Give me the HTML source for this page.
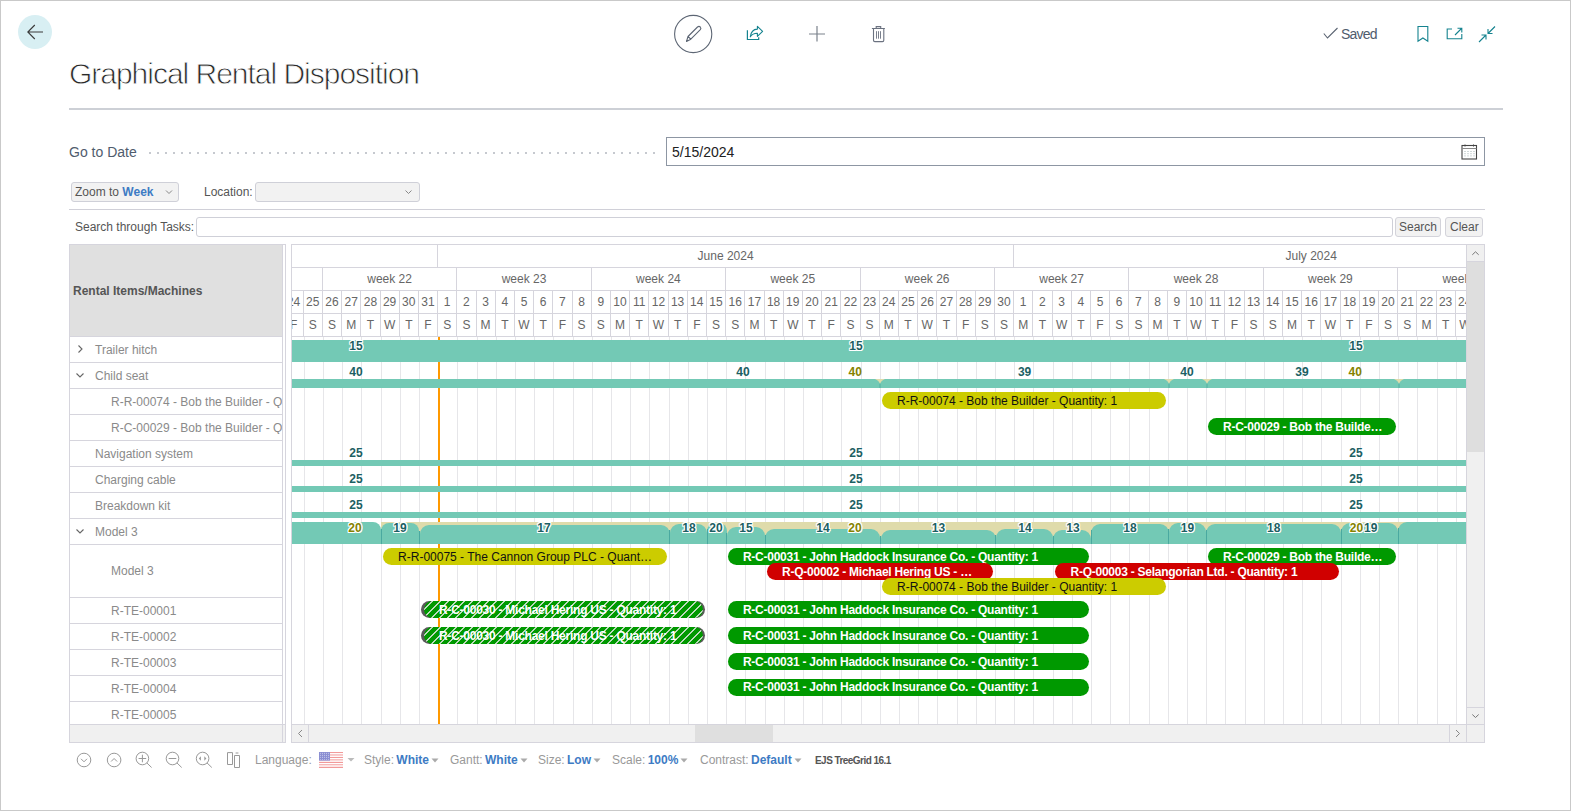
<!DOCTYPE html>
<html><head><meta charset="utf-8">
<style>
html,body{margin:0;padding:0;}
body{width:1571px;height:811px;overflow:hidden;position:relative;background:#fff;font-family:"Liberation Sans", sans-serif;}
.t{position:absolute;white-space:nowrap;line-height:1;}
.r{position:absolute;box-sizing:border-box;}
svg{position:absolute;overflow:visible;}
</style></head><body>

<div class="r" style="left:0px;top:0px;width:1571px;height:811px;border:1px solid #c9c9c9;border-right-width:1px;"></div>
<svg style="left:0;top:0" width="100" height="60"><circle cx="35" cy="32" r="17" fill="#d8eff3"/><path d="M28 32 H43 M34.8 25 L27.8 32 L34.8 39" fill="none" stroke="#3a3a3a" stroke-width="1.1"/></svg>
<svg style="left:660px;top:0" width="240" height="60"><circle cx="33.2" cy="34" r="18.6" fill="none" stroke="#5d6674" stroke-width="1.1"/><path d="M26.5 41.5 L28 36.5 L37.5 27 Q39 25.8 40.3 27 Q41.5 28.3 40.3 29.7 L30.8 39.2 Z M28 36.5 L30.8 39.2" fill="none" stroke="#5d6674" stroke-width="1.1" stroke-linejoin="round"/><path d="M87.4 30.2 V39.5 H98.7 V37.2" fill="none" stroke="#15838f" stroke-width="1.2"/><path d="M90.3 36.8 Q91.2 29.3 97.4 29.1 V26.3 L102.6 31.3 L97.4 36.3 V33.3 Q93 33.1 90.3 36.8 Z" fill="none" stroke="#15838f" stroke-width="1.1" stroke-linejoin="round"/><path d="M157 26 V41.5 M149 34 H165" fill="none" stroke="#7b828c" stroke-width="1.2"/><path d="M211.9 28.5 H224.9 M216.2 28.5 V26.6 H220.7 V28.5 M213.5 28.5 V40.3 Q213.5 41.6 214.8 41.6 H222.5 Q223.8 41.6 223.8 40.3 V28.5" fill="none" stroke="#6b7280" stroke-width="1.1"/><path d="M216.5 31.2 V38.7 M218.5 31.2 V38.7 M220.5 31.2 V38.7" fill="none" stroke="#6b7280" stroke-width="0.9"/></svg>
<svg style="left:1300px;top:0" width="271" height="60"><path d="M23.8 33.5 L27.5 38 L37.5 28" fill="none" stroke="#5b6472" stroke-width="1.1"/><path d="M118 26.5 H127.8 V41.3 L122.9 38 L118 41.3 Z" fill="none" stroke="#15838f" stroke-width="1.1" stroke-linejoin="miter"/><path d="M152 29 H147.2 V38.8 H161.8 V34" fill="none" stroke="#15838f" stroke-width="1.1"/><path d="M155 35 L161.5 28.5 M157.5 28.2 H161.8 V32.5" fill="none" stroke="#15838f" stroke-width="1.1"/><path d="M195 26.5 L188 33.5 M188 29 V33.5 H192.5 M179 42 L186 35 M181.5 35 H186 V39.5" fill="none" stroke="#15838f" stroke-width="1.1"/></svg>
<div class="t" style="left:1341.00px;top:26.95px;font-size:14px;color:#505c6d;font-weight:normal;letter-spacing:-0.8px;">Saved</div>
<div class="t" style="left:69.00px;top:59.41px;font-size:30px;color:#2a2a2a;font-weight:normal;letter-spacing:-1.02px;-webkit-text-stroke:0.8px #fff;">Graphical Rental Disposition</div>
<div class="r" style="left:69px;top:108px;width:1434px;height:2px;background:#cdd0d6;"></div>
<div class="t" style="left:69.00px;top:144.75px;font-size:14px;color:#505c6d;font-weight:normal;">Go to Date</div>
<div class="r" style="left:146px;top:152px;width:512px;height:2px;background-image:radial-gradient(circle,#c6c9cf 0.8px,transparent 1px);background-size:8px 2px;"></div>
<div class="r" style="left:666px;top:137px;width:819px;height:29px;border:1px solid #8d96a3;background:#fff;"></div>
<div class="t" style="left:672.00px;top:145.15px;font-size:14px;color:#212121;font-weight:normal;">5/15/2024</div>
<svg style="left:1460px;top:143px" width="20" height="20"><rect x="2" y="2.5" width="14.5" height="13.5" fill="none" stroke="#444" stroke-width="1.1"/><path d="M2 5.5 H16.5" stroke="#888" stroke-width="1"/><path d="M5 1.5 V3.5 M13.5 1.5 V3.5" stroke="#444" stroke-width="1"/><path d="M5 8 V14 M8 8 V14 M11 8 V14 M14 8 V14" stroke="#9aa" stroke-width="0.9" stroke-dasharray="1 1.2"/></svg>
<div class="r" style="left:71px;top:182px;width:108px;height:20px;border:1px solid #cfd0d8;border-radius:3px;background:#f2f2f2;"></div>
<div class="t" style="left:75.00px;top:185.84px;font-size:12px;color:#555;font-weight:normal;">Zoom to <b style="color:#3d7bc4">Week</b></div>
<svg style="left:160px;top:183px" width="20" height="20"><path d="M6 7.5 L9 10.5 L12 7.5" fill="none" stroke="#888" stroke-width="1"/></svg>
<div class="t" style="left:204.00px;top:185.84px;font-size:12px;color:#555;font-weight:normal;">Location:</div>
<div class="r" style="left:255px;top:182px;width:165px;height:20px;border:1px solid #cfd0d8;border-radius:3px;background:#f2f2f2;"></div>
<svg style="left:400px;top:183px" width="20" height="20"><path d="M5.5 7.5 L8.5 10.5 L11.5 7.5" fill="none" stroke="#888" stroke-width="1"/></svg>
<div class="r" style="left:69px;top:209px;width:1416px;height:1px;background:#d0d0d8;"></div>
<div class="t" style="left:75.00px;top:220.84px;font-size:12px;color:#555;font-weight:normal;">Search through Tasks:</div>
<div class="r" style="left:196px;top:217px;width:1197px;height:20px;border:1px solid #cfd0d8;border-radius:3px;background:#fff;"></div>
<div class="r" style="left:1395px;top:217px;width:46px;height:20px;border:1px solid #d3d3da;border-radius:3px;background:#f2f2f2;"></div>
<div class="t" style="left:1399.00px;top:220.84px;font-size:12px;color:#555;font-weight:normal;">Search</div>
<div class="r" style="left:1445px;top:217px;width:38px;height:20px;border:1px solid #d3d3da;border-radius:3px;background:#f2f2f2;"></div>
<div class="t" style="left:1450.00px;top:220.84px;font-size:12px;color:#555;font-weight:normal;">Clear</div>
<div class="r" style="left:69px;top:244px;width:217px;height:499px;border:1px solid #d6d5dd;background:#fff;"></div>
<div class="r" style="left:70px;top:245px;width:212px;height:91px;background:#e0e0e0;"></div>
<div class="r" style="left:282px;top:245px;width:1px;height:497px;background:#d6d5dd;"></div>
<div class="t" style="left:73.00px;top:285.04px;font-size:12px;color:#555;font-weight:bold;">Rental Items/Machines</div>
<div class="r" style="left:70px;top:336px;width:212px;height:1px;background:#d6d5dd;"></div>
<div class="r" style="left:70px;top:362px;width:212px;height:1px;background:#d6d5dd;"></div>
<div class="r" style="left:70px;top:388px;width:212px;height:1px;background:#d6d5dd;"></div>
<div class="r" style="left:70px;top:414px;width:212px;height:1px;background:#d6d5dd;"></div>
<div class="r" style="left:70px;top:440px;width:212px;height:1px;background:#d6d5dd;"></div>
<div class="r" style="left:70px;top:466px;width:212px;height:1px;background:#d6d5dd;"></div>
<div class="r" style="left:70px;top:492px;width:212px;height:1px;background:#d6d5dd;"></div>
<div class="r" style="left:70px;top:518px;width:212px;height:1px;background:#d6d5dd;"></div>
<div class="r" style="left:70px;top:544px;width:212px;height:1px;background:#d6d5dd;"></div>
<div class="r" style="left:70px;top:597px;width:212px;height:1px;background:#d6d5dd;"></div>
<div class="r" style="left:70px;top:623px;width:212px;height:1px;background:#d6d5dd;"></div>
<div class="r" style="left:70px;top:649px;width:212px;height:1px;background:#d6d5dd;"></div>
<div class="r" style="left:70px;top:675px;width:212px;height:1px;background:#d6d5dd;"></div>
<div class="r" style="left:70px;top:701px;width:212px;height:1px;background:#d6d5dd;"></div>
<div class="r" style="left:70px;top:725px;width:212px;height:17px;background:#f0f0f0;"></div>
<div class="r" style="left:283px;top:725px;width:2px;height:17px;background:#f0f0f0;"></div>
<div class="r" style="left:70px;top:724px;width:215px;height:1px;background:#d6d5dd;"></div>
<svg style="left:74px;top:343px" width="12" height="12"><path d="M4.5 2.5 L8 6 L4.5 9.5" fill="none" stroke="#666" stroke-width="1.1"/></svg>
<div class="t" style="left:95.00px;top:343.74px;font-size:12px;color:#8a8a8a;font-weight:normal;">Trailer hitch</div>
<svg style="left:74px;top:369px" width="12" height="12"><path d="M2.5 4.5 L6 8 L9.5 4.5" fill="none" stroke="#666" stroke-width="1.1"/></svg>
<div class="t" style="left:95.00px;top:369.74px;font-size:12px;color:#8a8a8a;font-weight:normal;">Child seat</div>
<div class="t" style="left:111.00px;top:395.74px;font-size:12px;color:#8a8a8a;font-weight:normal;width:171px;overflow:hidden;">R-R-00074 - Bob the Builder - Quantity: 1</div>
<div class="t" style="left:111.00px;top:421.74px;font-size:12px;color:#8a8a8a;font-weight:normal;width:171px;overflow:hidden;">R-C-00029 - Bob the Builder - Quantity: 1</div>
<div class="t" style="left:95.00px;top:447.74px;font-size:12px;color:#8a8a8a;font-weight:normal;">Navigation system</div>
<div class="t" style="left:95.00px;top:473.74px;font-size:12px;color:#8a8a8a;font-weight:normal;">Charging cable</div>
<div class="t" style="left:95.00px;top:499.74px;font-size:12px;color:#8a8a8a;font-weight:normal;">Breakdown kit</div>
<svg style="left:74px;top:525px" width="12" height="12"><path d="M2.5 4.5 L6 8 L9.5 4.5" fill="none" stroke="#666" stroke-width="1.1"/></svg>
<div class="t" style="left:95.00px;top:525.74px;font-size:12px;color:#8a8a8a;font-weight:normal;">Model 3</div>
<div class="t" style="left:111.00px;top:564.74px;font-size:12px;color:#8a8a8a;font-weight:normal;">Model 3</div>
<div class="t" style="left:111.00px;top:604.74px;font-size:12px;color:#8a8a8a;font-weight:normal;">R-TE-00001</div>
<div class="t" style="left:111.00px;top:630.74px;font-size:12px;color:#8a8a8a;font-weight:normal;">R-TE-00002</div>
<div class="t" style="left:111.00px;top:656.74px;font-size:12px;color:#8a8a8a;font-weight:normal;">R-TE-00003</div>
<div class="t" style="left:111.00px;top:682.74px;font-size:12px;color:#8a8a8a;font-weight:normal;">R-TE-00004</div>
<div class="t" style="left:111.00px;top:708.74px;font-size:12px;color:#8a8a8a;font-weight:normal;">R-TE-00005</div>
<div class="r" style="left:291px;top:244px;width:1194px;height:499px;border:1px solid #d6d5dd;background:#fff;"></div>
<div class="r" style="left:292px;top:267px;width:1174px;height:1px;background:#d6d5dd;"></div>
<div class="r" style="left:292px;top:290px;width:1174px;height:1px;background:#d6d5dd;"></div>
<div class="r" style="left:292px;top:313px;width:1174px;height:1px;background:#d6d5dd;"></div>
<div class="r" style="left:292px;top:336px;width:1174px;height:1px;background:#d6d5dd;"></div>
<div style="position:absolute;left:292px;top:245px;width:1174px;height:479px;overflow:hidden;">
<div class="r" style="left:-28.00px;top:46.00px;width:1.00px;height:45.00px;background:#d6d5dd;"></div>
<div class="r" style="left:-27.00px;top:92.00px;width:1.00px;height:387.00px;background:#e6e6e9;"></div>
<div class="t" style="left:-32.60px;width:30px;text-align:center;top:51.34px;font-size:12px;color:#666;font-weight:normal;">23</div>
<div class="t" style="left:-32.60px;width:30px;text-align:center;top:73.84px;font-size:12px;color:#666;font-weight:normal;">T</div>
<div class="r" style="left:-8.00px;top:46.00px;width:1.00px;height:45.00px;background:#d6d5dd;"></div>
<div class="r" style="left:-7.00px;top:92.00px;width:1.00px;height:387.00px;background:#e6e6e9;"></div>
<div class="t" style="left:-13.40px;width:30px;text-align:center;top:51.34px;font-size:12px;color:#666;font-weight:normal;">24</div>
<div class="t" style="left:-13.40px;width:30px;text-align:center;top:73.84px;font-size:12px;color:#666;font-weight:normal;">F</div>
<div class="r" style="left:11.00px;top:46.00px;width:1.00px;height:45.00px;background:#d6d5dd;"></div>
<div class="r" style="left:12.00px;top:92.00px;width:1.00px;height:387.00px;background:#e6e6e9;"></div>
<div class="t" style="left:5.80px;width:30px;text-align:center;top:51.34px;font-size:12px;color:#666;font-weight:normal;">25</div>
<div class="t" style="left:5.80px;width:30px;text-align:center;top:73.84px;font-size:12px;color:#666;font-weight:normal;">S</div>
<div class="r" style="left:30.00px;top:46.00px;width:1.00px;height:45.00px;background:#d6d5dd;"></div>
<div class="r" style="left:31.00px;top:92.00px;width:1.00px;height:387.00px;background:#e6e6e9;"></div>
<div class="t" style="left:25.00px;width:30px;text-align:center;top:51.34px;font-size:12px;color:#666;font-weight:normal;">26</div>
<div class="t" style="left:25.00px;width:30px;text-align:center;top:73.84px;font-size:12px;color:#666;font-weight:normal;">S</div>
<div class="r" style="left:30.00px;top:23.00px;width:1.00px;height:22.00px;background:#d6d5dd;"></div>
<div class="r" style="left:49.00px;top:46.00px;width:1.00px;height:45.00px;background:#d6d5dd;"></div>
<div class="r" style="left:50.00px;top:92.00px;width:1.00px;height:387.00px;background:#e6e6e9;"></div>
<div class="t" style="left:44.20px;width:30px;text-align:center;top:51.34px;font-size:12px;color:#666;font-weight:normal;">27</div>
<div class="t" style="left:44.20px;width:30px;text-align:center;top:73.84px;font-size:12px;color:#666;font-weight:normal;">M</div>
<div class="r" style="left:68.00px;top:46.00px;width:1.00px;height:45.00px;background:#d6d5dd;"></div>
<div class="r" style="left:69.00px;top:92.00px;width:1.00px;height:387.00px;background:#e6e6e9;"></div>
<div class="t" style="left:63.40px;width:30px;text-align:center;top:51.34px;font-size:12px;color:#666;font-weight:normal;">28</div>
<div class="t" style="left:63.40px;width:30px;text-align:center;top:73.84px;font-size:12px;color:#666;font-weight:normal;">T</div>
<div class="r" style="left:88.00px;top:46.00px;width:1.00px;height:45.00px;background:#d6d5dd;"></div>
<div class="r" style="left:89.00px;top:92.00px;width:1.00px;height:387.00px;background:#e6e6e9;"></div>
<div class="t" style="left:82.60px;width:30px;text-align:center;top:51.34px;font-size:12px;color:#666;font-weight:normal;">29</div>
<div class="t" style="left:82.60px;width:30px;text-align:center;top:73.84px;font-size:12px;color:#666;font-weight:normal;">W</div>
<div class="r" style="left:107.00px;top:46.00px;width:1.00px;height:45.00px;background:#d6d5dd;"></div>
<div class="r" style="left:108.00px;top:92.00px;width:1.00px;height:387.00px;background:#e6e6e9;"></div>
<div class="t" style="left:101.80px;width:30px;text-align:center;top:51.34px;font-size:12px;color:#666;font-weight:normal;">30</div>
<div class="t" style="left:101.80px;width:30px;text-align:center;top:73.84px;font-size:12px;color:#666;font-weight:normal;">T</div>
<div class="r" style="left:126.00px;top:46.00px;width:1.00px;height:45.00px;background:#d6d5dd;"></div>
<div class="r" style="left:127.00px;top:92.00px;width:1.00px;height:387.00px;background:#e6e6e9;"></div>
<div class="t" style="left:121.00px;width:30px;text-align:center;top:51.34px;font-size:12px;color:#666;font-weight:normal;">31</div>
<div class="t" style="left:121.00px;width:30px;text-align:center;top:73.84px;font-size:12px;color:#666;font-weight:normal;">F</div>
<div class="r" style="left:145.00px;top:46.00px;width:1.00px;height:45.00px;background:#d6d5dd;"></div>
<div class="r" style="left:146.00px;top:92.00px;width:1.00px;height:387.00px;background:#e6e6e9;"></div>
<div class="t" style="left:140.20px;width:30px;text-align:center;top:51.34px;font-size:12px;color:#666;font-weight:normal;">1</div>
<div class="t" style="left:140.20px;width:30px;text-align:center;top:73.84px;font-size:12px;color:#666;font-weight:normal;">S</div>
<div class="r" style="left:164.00px;top:46.00px;width:1.00px;height:45.00px;background:#d6d5dd;"></div>
<div class="r" style="left:165.00px;top:92.00px;width:1.00px;height:387.00px;background:#e6e6e9;"></div>
<div class="t" style="left:159.40px;width:30px;text-align:center;top:51.34px;font-size:12px;color:#666;font-weight:normal;">2</div>
<div class="t" style="left:159.40px;width:30px;text-align:center;top:73.84px;font-size:12px;color:#666;font-weight:normal;">S</div>
<div class="r" style="left:164.00px;top:23.00px;width:1.00px;height:22.00px;background:#d6d5dd;"></div>
<div class="r" style="left:184.00px;top:46.00px;width:1.00px;height:45.00px;background:#d6d5dd;"></div>
<div class="r" style="left:185.00px;top:92.00px;width:1.00px;height:387.00px;background:#e6e6e9;"></div>
<div class="t" style="left:178.60px;width:30px;text-align:center;top:51.34px;font-size:12px;color:#666;font-weight:normal;">3</div>
<div class="t" style="left:178.60px;width:30px;text-align:center;top:73.84px;font-size:12px;color:#666;font-weight:normal;">M</div>
<div class="r" style="left:203.00px;top:46.00px;width:1.00px;height:45.00px;background:#d6d5dd;"></div>
<div class="r" style="left:204.00px;top:92.00px;width:1.00px;height:387.00px;background:#e6e6e9;"></div>
<div class="t" style="left:197.80px;width:30px;text-align:center;top:51.34px;font-size:12px;color:#666;font-weight:normal;">4</div>
<div class="t" style="left:197.80px;width:30px;text-align:center;top:73.84px;font-size:12px;color:#666;font-weight:normal;">T</div>
<div class="r" style="left:222.00px;top:46.00px;width:1.00px;height:45.00px;background:#d6d5dd;"></div>
<div class="r" style="left:223.00px;top:92.00px;width:1.00px;height:387.00px;background:#e6e6e9;"></div>
<div class="t" style="left:217.00px;width:30px;text-align:center;top:51.34px;font-size:12px;color:#666;font-weight:normal;">5</div>
<div class="t" style="left:217.00px;width:30px;text-align:center;top:73.84px;font-size:12px;color:#666;font-weight:normal;">W</div>
<div class="r" style="left:241.00px;top:46.00px;width:1.00px;height:45.00px;background:#d6d5dd;"></div>
<div class="r" style="left:242.00px;top:92.00px;width:1.00px;height:387.00px;background:#e6e6e9;"></div>
<div class="t" style="left:236.20px;width:30px;text-align:center;top:51.34px;font-size:12px;color:#666;font-weight:normal;">6</div>
<div class="t" style="left:236.20px;width:30px;text-align:center;top:73.84px;font-size:12px;color:#666;font-weight:normal;">T</div>
<div class="r" style="left:260.00px;top:46.00px;width:1.00px;height:45.00px;background:#d6d5dd;"></div>
<div class="r" style="left:261.00px;top:92.00px;width:1.00px;height:387.00px;background:#e6e6e9;"></div>
<div class="t" style="left:255.40px;width:30px;text-align:center;top:51.34px;font-size:12px;color:#666;font-weight:normal;">7</div>
<div class="t" style="left:255.40px;width:30px;text-align:center;top:73.84px;font-size:12px;color:#666;font-weight:normal;">F</div>
<div class="r" style="left:280.00px;top:46.00px;width:1.00px;height:45.00px;background:#d6d5dd;"></div>
<div class="r" style="left:281.00px;top:92.00px;width:1.00px;height:387.00px;background:#e6e6e9;"></div>
<div class="t" style="left:274.60px;width:30px;text-align:center;top:51.34px;font-size:12px;color:#666;font-weight:normal;">8</div>
<div class="t" style="left:274.60px;width:30px;text-align:center;top:73.84px;font-size:12px;color:#666;font-weight:normal;">S</div>
<div class="r" style="left:299.00px;top:46.00px;width:1.00px;height:45.00px;background:#d6d5dd;"></div>
<div class="r" style="left:300.00px;top:92.00px;width:1.00px;height:387.00px;background:#e6e6e9;"></div>
<div class="t" style="left:293.80px;width:30px;text-align:center;top:51.34px;font-size:12px;color:#666;font-weight:normal;">9</div>
<div class="t" style="left:293.80px;width:30px;text-align:center;top:73.84px;font-size:12px;color:#666;font-weight:normal;">S</div>
<div class="r" style="left:299.00px;top:23.00px;width:1.00px;height:22.00px;background:#d6d5dd;"></div>
<div class="r" style="left:318.00px;top:46.00px;width:1.00px;height:45.00px;background:#d6d5dd;"></div>
<div class="r" style="left:319.00px;top:92.00px;width:1.00px;height:387.00px;background:#e6e6e9;"></div>
<div class="t" style="left:313.00px;width:30px;text-align:center;top:51.34px;font-size:12px;color:#666;font-weight:normal;">10</div>
<div class="t" style="left:313.00px;width:30px;text-align:center;top:73.84px;font-size:12px;color:#666;font-weight:normal;">M</div>
<div class="r" style="left:337.00px;top:46.00px;width:1.00px;height:45.00px;background:#d6d5dd;"></div>
<div class="r" style="left:338.00px;top:92.00px;width:1.00px;height:387.00px;background:#e6e6e9;"></div>
<div class="t" style="left:332.20px;width:30px;text-align:center;top:51.34px;font-size:12px;color:#666;font-weight:normal;">11</div>
<div class="t" style="left:332.20px;width:30px;text-align:center;top:73.84px;font-size:12px;color:#666;font-weight:normal;">T</div>
<div class="r" style="left:356.00px;top:46.00px;width:1.00px;height:45.00px;background:#d6d5dd;"></div>
<div class="r" style="left:357.00px;top:92.00px;width:1.00px;height:387.00px;background:#e6e6e9;"></div>
<div class="t" style="left:351.40px;width:30px;text-align:center;top:51.34px;font-size:12px;color:#666;font-weight:normal;">12</div>
<div class="t" style="left:351.40px;width:30px;text-align:center;top:73.84px;font-size:12px;color:#666;font-weight:normal;">W</div>
<div class="r" style="left:376.00px;top:46.00px;width:1.00px;height:45.00px;background:#d6d5dd;"></div>
<div class="r" style="left:377.00px;top:92.00px;width:1.00px;height:387.00px;background:#e6e6e9;"></div>
<div class="t" style="left:370.60px;width:30px;text-align:center;top:51.34px;font-size:12px;color:#666;font-weight:normal;">13</div>
<div class="t" style="left:370.60px;width:30px;text-align:center;top:73.84px;font-size:12px;color:#666;font-weight:normal;">T</div>
<div class="r" style="left:395.00px;top:46.00px;width:1.00px;height:45.00px;background:#d6d5dd;"></div>
<div class="r" style="left:396.00px;top:92.00px;width:1.00px;height:387.00px;background:#e6e6e9;"></div>
<div class="t" style="left:389.80px;width:30px;text-align:center;top:51.34px;font-size:12px;color:#666;font-weight:normal;">14</div>
<div class="t" style="left:389.80px;width:30px;text-align:center;top:73.84px;font-size:12px;color:#666;font-weight:normal;">F</div>
<div class="r" style="left:414.00px;top:46.00px;width:1.00px;height:45.00px;background:#d6d5dd;"></div>
<div class="r" style="left:415.00px;top:92.00px;width:1.00px;height:387.00px;background:#e6e6e9;"></div>
<div class="t" style="left:409.00px;width:30px;text-align:center;top:51.34px;font-size:12px;color:#666;font-weight:normal;">15</div>
<div class="t" style="left:409.00px;width:30px;text-align:center;top:73.84px;font-size:12px;color:#666;font-weight:normal;">S</div>
<div class="r" style="left:433.00px;top:46.00px;width:1.00px;height:45.00px;background:#d6d5dd;"></div>
<div class="r" style="left:434.00px;top:92.00px;width:1.00px;height:387.00px;background:#e6e6e9;"></div>
<div class="t" style="left:428.20px;width:30px;text-align:center;top:51.34px;font-size:12px;color:#666;font-weight:normal;">16</div>
<div class="t" style="left:428.20px;width:30px;text-align:center;top:73.84px;font-size:12px;color:#666;font-weight:normal;">S</div>
<div class="r" style="left:433.00px;top:23.00px;width:1.00px;height:22.00px;background:#d6d5dd;"></div>
<div class="r" style="left:452.00px;top:46.00px;width:1.00px;height:45.00px;background:#d6d5dd;"></div>
<div class="r" style="left:453.00px;top:92.00px;width:1.00px;height:387.00px;background:#e6e6e9;"></div>
<div class="t" style="left:447.40px;width:30px;text-align:center;top:51.34px;font-size:12px;color:#666;font-weight:normal;">17</div>
<div class="t" style="left:447.40px;width:30px;text-align:center;top:73.84px;font-size:12px;color:#666;font-weight:normal;">M</div>
<div class="r" style="left:472.00px;top:46.00px;width:1.00px;height:45.00px;background:#d6d5dd;"></div>
<div class="r" style="left:473.00px;top:92.00px;width:1.00px;height:387.00px;background:#e6e6e9;"></div>
<div class="t" style="left:466.60px;width:30px;text-align:center;top:51.34px;font-size:12px;color:#666;font-weight:normal;">18</div>
<div class="t" style="left:466.60px;width:30px;text-align:center;top:73.84px;font-size:12px;color:#666;font-weight:normal;">T</div>
<div class="r" style="left:491.00px;top:46.00px;width:1.00px;height:45.00px;background:#d6d5dd;"></div>
<div class="r" style="left:492.00px;top:92.00px;width:1.00px;height:387.00px;background:#e6e6e9;"></div>
<div class="t" style="left:485.80px;width:30px;text-align:center;top:51.34px;font-size:12px;color:#666;font-weight:normal;">19</div>
<div class="t" style="left:485.80px;width:30px;text-align:center;top:73.84px;font-size:12px;color:#666;font-weight:normal;">W</div>
<div class="r" style="left:510.00px;top:46.00px;width:1.00px;height:45.00px;background:#d6d5dd;"></div>
<div class="r" style="left:511.00px;top:92.00px;width:1.00px;height:387.00px;background:#e6e6e9;"></div>
<div class="t" style="left:505.00px;width:30px;text-align:center;top:51.34px;font-size:12px;color:#666;font-weight:normal;">20</div>
<div class="t" style="left:505.00px;width:30px;text-align:center;top:73.84px;font-size:12px;color:#666;font-weight:normal;">T</div>
<div class="r" style="left:529.00px;top:46.00px;width:1.00px;height:45.00px;background:#d6d5dd;"></div>
<div class="r" style="left:530.00px;top:92.00px;width:1.00px;height:387.00px;background:#e6e6e9;"></div>
<div class="t" style="left:524.20px;width:30px;text-align:center;top:51.34px;font-size:12px;color:#666;font-weight:normal;">21</div>
<div class="t" style="left:524.20px;width:30px;text-align:center;top:73.84px;font-size:12px;color:#666;font-weight:normal;">F</div>
<div class="r" style="left:548.00px;top:46.00px;width:1.00px;height:45.00px;background:#d6d5dd;"></div>
<div class="r" style="left:549.00px;top:92.00px;width:1.00px;height:387.00px;background:#e6e6e9;"></div>
<div class="t" style="left:543.40px;width:30px;text-align:center;top:51.34px;font-size:12px;color:#666;font-weight:normal;">22</div>
<div class="t" style="left:543.40px;width:30px;text-align:center;top:73.84px;font-size:12px;color:#666;font-weight:normal;">S</div>
<div class="r" style="left:568.00px;top:46.00px;width:1.00px;height:45.00px;background:#d6d5dd;"></div>
<div class="r" style="left:569.00px;top:92.00px;width:1.00px;height:387.00px;background:#e6e6e9;"></div>
<div class="t" style="left:562.60px;width:30px;text-align:center;top:51.34px;font-size:12px;color:#666;font-weight:normal;">23</div>
<div class="t" style="left:562.60px;width:30px;text-align:center;top:73.84px;font-size:12px;color:#666;font-weight:normal;">S</div>
<div class="r" style="left:568.00px;top:23.00px;width:1.00px;height:22.00px;background:#d6d5dd;"></div>
<div class="r" style="left:587.00px;top:46.00px;width:1.00px;height:45.00px;background:#d6d5dd;"></div>
<div class="r" style="left:588.00px;top:92.00px;width:1.00px;height:387.00px;background:#e6e6e9;"></div>
<div class="t" style="left:581.80px;width:30px;text-align:center;top:51.34px;font-size:12px;color:#666;font-weight:normal;">24</div>
<div class="t" style="left:581.80px;width:30px;text-align:center;top:73.84px;font-size:12px;color:#666;font-weight:normal;">M</div>
<div class="r" style="left:606.00px;top:46.00px;width:1.00px;height:45.00px;background:#d6d5dd;"></div>
<div class="r" style="left:607.00px;top:92.00px;width:1.00px;height:387.00px;background:#e6e6e9;"></div>
<div class="t" style="left:601.00px;width:30px;text-align:center;top:51.34px;font-size:12px;color:#666;font-weight:normal;">25</div>
<div class="t" style="left:601.00px;width:30px;text-align:center;top:73.84px;font-size:12px;color:#666;font-weight:normal;">T</div>
<div class="r" style="left:625.00px;top:46.00px;width:1.00px;height:45.00px;background:#d6d5dd;"></div>
<div class="r" style="left:626.00px;top:92.00px;width:1.00px;height:387.00px;background:#e6e6e9;"></div>
<div class="t" style="left:620.20px;width:30px;text-align:center;top:51.34px;font-size:12px;color:#666;font-weight:normal;">26</div>
<div class="t" style="left:620.20px;width:30px;text-align:center;top:73.84px;font-size:12px;color:#666;font-weight:normal;">W</div>
<div class="r" style="left:644.00px;top:46.00px;width:1.00px;height:45.00px;background:#d6d5dd;"></div>
<div class="r" style="left:645.00px;top:92.00px;width:1.00px;height:387.00px;background:#e6e6e9;"></div>
<div class="t" style="left:639.40px;width:30px;text-align:center;top:51.34px;font-size:12px;color:#666;font-weight:normal;">27</div>
<div class="t" style="left:639.40px;width:30px;text-align:center;top:73.84px;font-size:12px;color:#666;font-weight:normal;">T</div>
<div class="r" style="left:664.00px;top:46.00px;width:1.00px;height:45.00px;background:#d6d5dd;"></div>
<div class="r" style="left:665.00px;top:92.00px;width:1.00px;height:387.00px;background:#e6e6e9;"></div>
<div class="t" style="left:658.60px;width:30px;text-align:center;top:51.34px;font-size:12px;color:#666;font-weight:normal;">28</div>
<div class="t" style="left:658.60px;width:30px;text-align:center;top:73.84px;font-size:12px;color:#666;font-weight:normal;">F</div>
<div class="r" style="left:683.00px;top:46.00px;width:1.00px;height:45.00px;background:#d6d5dd;"></div>
<div class="r" style="left:684.00px;top:92.00px;width:1.00px;height:387.00px;background:#e6e6e9;"></div>
<div class="t" style="left:677.80px;width:30px;text-align:center;top:51.34px;font-size:12px;color:#666;font-weight:normal;">29</div>
<div class="t" style="left:677.80px;width:30px;text-align:center;top:73.84px;font-size:12px;color:#666;font-weight:normal;">S</div>
<div class="r" style="left:702.00px;top:46.00px;width:1.00px;height:45.00px;background:#d6d5dd;"></div>
<div class="r" style="left:703.00px;top:92.00px;width:1.00px;height:387.00px;background:#e6e6e9;"></div>
<div class="t" style="left:697.00px;width:30px;text-align:center;top:51.34px;font-size:12px;color:#666;font-weight:normal;">30</div>
<div class="t" style="left:697.00px;width:30px;text-align:center;top:73.84px;font-size:12px;color:#666;font-weight:normal;">S</div>
<div class="r" style="left:702.00px;top:23.00px;width:1.00px;height:22.00px;background:#d6d5dd;"></div>
<div class="r" style="left:721.00px;top:46.00px;width:1.00px;height:45.00px;background:#d6d5dd;"></div>
<div class="r" style="left:722.00px;top:92.00px;width:1.00px;height:387.00px;background:#e6e6e9;"></div>
<div class="t" style="left:716.20px;width:30px;text-align:center;top:51.34px;font-size:12px;color:#666;font-weight:normal;">1</div>
<div class="t" style="left:716.20px;width:30px;text-align:center;top:73.84px;font-size:12px;color:#666;font-weight:normal;">M</div>
<div class="r" style="left:740.00px;top:46.00px;width:1.00px;height:45.00px;background:#d6d5dd;"></div>
<div class="r" style="left:741.00px;top:92.00px;width:1.00px;height:387.00px;background:#e6e6e9;"></div>
<div class="t" style="left:735.40px;width:30px;text-align:center;top:51.34px;font-size:12px;color:#666;font-weight:normal;">2</div>
<div class="t" style="left:735.40px;width:30px;text-align:center;top:73.84px;font-size:12px;color:#666;font-weight:normal;">T</div>
<div class="r" style="left:760.00px;top:46.00px;width:1.00px;height:45.00px;background:#d6d5dd;"></div>
<div class="r" style="left:761.00px;top:92.00px;width:1.00px;height:387.00px;background:#e6e6e9;"></div>
<div class="t" style="left:754.60px;width:30px;text-align:center;top:51.34px;font-size:12px;color:#666;font-weight:normal;">3</div>
<div class="t" style="left:754.60px;width:30px;text-align:center;top:73.84px;font-size:12px;color:#666;font-weight:normal;">W</div>
<div class="r" style="left:779.00px;top:46.00px;width:1.00px;height:45.00px;background:#d6d5dd;"></div>
<div class="r" style="left:780.00px;top:92.00px;width:1.00px;height:387.00px;background:#e6e6e9;"></div>
<div class="t" style="left:773.80px;width:30px;text-align:center;top:51.34px;font-size:12px;color:#666;font-weight:normal;">4</div>
<div class="t" style="left:773.80px;width:30px;text-align:center;top:73.84px;font-size:12px;color:#666;font-weight:normal;">T</div>
<div class="r" style="left:798.00px;top:46.00px;width:1.00px;height:45.00px;background:#d6d5dd;"></div>
<div class="r" style="left:799.00px;top:92.00px;width:1.00px;height:387.00px;background:#e6e6e9;"></div>
<div class="t" style="left:793.00px;width:30px;text-align:center;top:51.34px;font-size:12px;color:#666;font-weight:normal;">5</div>
<div class="t" style="left:793.00px;width:30px;text-align:center;top:73.84px;font-size:12px;color:#666;font-weight:normal;">F</div>
<div class="r" style="left:817.00px;top:46.00px;width:1.00px;height:45.00px;background:#d6d5dd;"></div>
<div class="r" style="left:818.00px;top:92.00px;width:1.00px;height:387.00px;background:#e6e6e9;"></div>
<div class="t" style="left:812.20px;width:30px;text-align:center;top:51.34px;font-size:12px;color:#666;font-weight:normal;">6</div>
<div class="t" style="left:812.20px;width:30px;text-align:center;top:73.84px;font-size:12px;color:#666;font-weight:normal;">S</div>
<div class="r" style="left:836.00px;top:46.00px;width:1.00px;height:45.00px;background:#d6d5dd;"></div>
<div class="r" style="left:837.00px;top:92.00px;width:1.00px;height:387.00px;background:#e6e6e9;"></div>
<div class="t" style="left:831.40px;width:30px;text-align:center;top:51.34px;font-size:12px;color:#666;font-weight:normal;">7</div>
<div class="t" style="left:831.40px;width:30px;text-align:center;top:73.84px;font-size:12px;color:#666;font-weight:normal;">S</div>
<div class="r" style="left:836.00px;top:23.00px;width:1.00px;height:22.00px;background:#d6d5dd;"></div>
<div class="r" style="left:856.00px;top:46.00px;width:1.00px;height:45.00px;background:#d6d5dd;"></div>
<div class="r" style="left:857.00px;top:92.00px;width:1.00px;height:387.00px;background:#e6e6e9;"></div>
<div class="t" style="left:850.60px;width:30px;text-align:center;top:51.34px;font-size:12px;color:#666;font-weight:normal;">8</div>
<div class="t" style="left:850.60px;width:30px;text-align:center;top:73.84px;font-size:12px;color:#666;font-weight:normal;">M</div>
<div class="r" style="left:875.00px;top:46.00px;width:1.00px;height:45.00px;background:#d6d5dd;"></div>
<div class="r" style="left:876.00px;top:92.00px;width:1.00px;height:387.00px;background:#e6e6e9;"></div>
<div class="t" style="left:869.80px;width:30px;text-align:center;top:51.34px;font-size:12px;color:#666;font-weight:normal;">9</div>
<div class="t" style="left:869.80px;width:30px;text-align:center;top:73.84px;font-size:12px;color:#666;font-weight:normal;">T</div>
<div class="r" style="left:894.00px;top:46.00px;width:1.00px;height:45.00px;background:#d6d5dd;"></div>
<div class="r" style="left:895.00px;top:92.00px;width:1.00px;height:387.00px;background:#e6e6e9;"></div>
<div class="t" style="left:889.00px;width:30px;text-align:center;top:51.34px;font-size:12px;color:#666;font-weight:normal;">10</div>
<div class="t" style="left:889.00px;width:30px;text-align:center;top:73.84px;font-size:12px;color:#666;font-weight:normal;">W</div>
<div class="r" style="left:913.00px;top:46.00px;width:1.00px;height:45.00px;background:#d6d5dd;"></div>
<div class="r" style="left:914.00px;top:92.00px;width:1.00px;height:387.00px;background:#e6e6e9;"></div>
<div class="t" style="left:908.20px;width:30px;text-align:center;top:51.34px;font-size:12px;color:#666;font-weight:normal;">11</div>
<div class="t" style="left:908.20px;width:30px;text-align:center;top:73.84px;font-size:12px;color:#666;font-weight:normal;">T</div>
<div class="r" style="left:932.00px;top:46.00px;width:1.00px;height:45.00px;background:#d6d5dd;"></div>
<div class="r" style="left:933.00px;top:92.00px;width:1.00px;height:387.00px;background:#e6e6e9;"></div>
<div class="t" style="left:927.40px;width:30px;text-align:center;top:51.34px;font-size:12px;color:#666;font-weight:normal;">12</div>
<div class="t" style="left:927.40px;width:30px;text-align:center;top:73.84px;font-size:12px;color:#666;font-weight:normal;">F</div>
<div class="r" style="left:952.00px;top:46.00px;width:1.00px;height:45.00px;background:#d6d5dd;"></div>
<div class="r" style="left:953.00px;top:92.00px;width:1.00px;height:387.00px;background:#e6e6e9;"></div>
<div class="t" style="left:946.60px;width:30px;text-align:center;top:51.34px;font-size:12px;color:#666;font-weight:normal;">13</div>
<div class="t" style="left:946.60px;width:30px;text-align:center;top:73.84px;font-size:12px;color:#666;font-weight:normal;">S</div>
<div class="r" style="left:971.00px;top:46.00px;width:1.00px;height:45.00px;background:#d6d5dd;"></div>
<div class="r" style="left:972.00px;top:92.00px;width:1.00px;height:387.00px;background:#e6e6e9;"></div>
<div class="t" style="left:965.80px;width:30px;text-align:center;top:51.34px;font-size:12px;color:#666;font-weight:normal;">14</div>
<div class="t" style="left:965.80px;width:30px;text-align:center;top:73.84px;font-size:12px;color:#666;font-weight:normal;">S</div>
<div class="r" style="left:971.00px;top:23.00px;width:1.00px;height:22.00px;background:#d6d5dd;"></div>
<div class="r" style="left:990.00px;top:46.00px;width:1.00px;height:45.00px;background:#d6d5dd;"></div>
<div class="r" style="left:991.00px;top:92.00px;width:1.00px;height:387.00px;background:#e6e6e9;"></div>
<div class="t" style="left:985.00px;width:30px;text-align:center;top:51.34px;font-size:12px;color:#666;font-weight:normal;">15</div>
<div class="t" style="left:985.00px;width:30px;text-align:center;top:73.84px;font-size:12px;color:#666;font-weight:normal;">M</div>
<div class="r" style="left:1009.00px;top:46.00px;width:1.00px;height:45.00px;background:#d6d5dd;"></div>
<div class="r" style="left:1010.00px;top:92.00px;width:1.00px;height:387.00px;background:#e6e6e9;"></div>
<div class="t" style="left:1004.20px;width:30px;text-align:center;top:51.34px;font-size:12px;color:#666;font-weight:normal;">16</div>
<div class="t" style="left:1004.20px;width:30px;text-align:center;top:73.84px;font-size:12px;color:#666;font-weight:normal;">T</div>
<div class="r" style="left:1028.00px;top:46.00px;width:1.00px;height:45.00px;background:#d6d5dd;"></div>
<div class="r" style="left:1029.00px;top:92.00px;width:1.00px;height:387.00px;background:#e6e6e9;"></div>
<div class="t" style="left:1023.40px;width:30px;text-align:center;top:51.34px;font-size:12px;color:#666;font-weight:normal;">17</div>
<div class="t" style="left:1023.40px;width:30px;text-align:center;top:73.84px;font-size:12px;color:#666;font-weight:normal;">W</div>
<div class="r" style="left:1048.00px;top:46.00px;width:1.00px;height:45.00px;background:#d6d5dd;"></div>
<div class="r" style="left:1049.00px;top:92.00px;width:1.00px;height:387.00px;background:#e6e6e9;"></div>
<div class="t" style="left:1042.60px;width:30px;text-align:center;top:51.34px;font-size:12px;color:#666;font-weight:normal;">18</div>
<div class="t" style="left:1042.60px;width:30px;text-align:center;top:73.84px;font-size:12px;color:#666;font-weight:normal;">T</div>
<div class="r" style="left:1067.00px;top:46.00px;width:1.00px;height:45.00px;background:#d6d5dd;"></div>
<div class="r" style="left:1068.00px;top:92.00px;width:1.00px;height:387.00px;background:#e6e6e9;"></div>
<div class="t" style="left:1061.80px;width:30px;text-align:center;top:51.34px;font-size:12px;color:#666;font-weight:normal;">19</div>
<div class="t" style="left:1061.80px;width:30px;text-align:center;top:73.84px;font-size:12px;color:#666;font-weight:normal;">F</div>
<div class="r" style="left:1086.00px;top:46.00px;width:1.00px;height:45.00px;background:#d6d5dd;"></div>
<div class="r" style="left:1087.00px;top:92.00px;width:1.00px;height:387.00px;background:#e6e6e9;"></div>
<div class="t" style="left:1081.00px;width:30px;text-align:center;top:51.34px;font-size:12px;color:#666;font-weight:normal;">20</div>
<div class="t" style="left:1081.00px;width:30px;text-align:center;top:73.84px;font-size:12px;color:#666;font-weight:normal;">S</div>
<div class="r" style="left:1105.00px;top:46.00px;width:1.00px;height:45.00px;background:#d6d5dd;"></div>
<div class="r" style="left:1106.00px;top:92.00px;width:1.00px;height:387.00px;background:#e6e6e9;"></div>
<div class="t" style="left:1100.20px;width:30px;text-align:center;top:51.34px;font-size:12px;color:#666;font-weight:normal;">21</div>
<div class="t" style="left:1100.20px;width:30px;text-align:center;top:73.84px;font-size:12px;color:#666;font-weight:normal;">S</div>
<div class="r" style="left:1105.00px;top:23.00px;width:1.00px;height:22.00px;background:#d6d5dd;"></div>
<div class="r" style="left:1124.00px;top:46.00px;width:1.00px;height:45.00px;background:#d6d5dd;"></div>
<div class="r" style="left:1125.00px;top:92.00px;width:1.00px;height:387.00px;background:#e6e6e9;"></div>
<div class="t" style="left:1119.40px;width:30px;text-align:center;top:51.34px;font-size:12px;color:#666;font-weight:normal;">22</div>
<div class="t" style="left:1119.40px;width:30px;text-align:center;top:73.84px;font-size:12px;color:#666;font-weight:normal;">M</div>
<div class="r" style="left:1144.00px;top:46.00px;width:1.00px;height:45.00px;background:#d6d5dd;"></div>
<div class="r" style="left:1145.00px;top:92.00px;width:1.00px;height:387.00px;background:#e6e6e9;"></div>
<div class="t" style="left:1138.60px;width:30px;text-align:center;top:51.34px;font-size:12px;color:#666;font-weight:normal;">23</div>
<div class="t" style="left:1138.60px;width:30px;text-align:center;top:73.84px;font-size:12px;color:#666;font-weight:normal;">T</div>
<div class="r" style="left:1163.00px;top:46.00px;width:1.00px;height:45.00px;background:#d6d5dd;"></div>
<div class="r" style="left:1164.00px;top:92.00px;width:1.00px;height:387.00px;background:#e6e6e9;"></div>
<div class="t" style="left:1157.80px;width:30px;text-align:center;top:51.34px;font-size:12px;color:#666;font-weight:normal;">24</div>
<div class="t" style="left:1157.80px;width:30px;text-align:center;top:73.84px;font-size:12px;color:#666;font-weight:normal;">W</div>
<div class="r" style="left:1182.00px;top:46.00px;width:1.00px;height:45.00px;background:#d6d5dd;"></div>
<div class="r" style="left:1183.00px;top:92.00px;width:1.00px;height:387.00px;background:#e6e6e9;"></div>
<div class="t" style="left:1177.00px;width:30px;text-align:center;top:51.34px;font-size:12px;color:#666;font-weight:normal;">25</div>
<div class="t" style="left:1177.00px;width:30px;text-align:center;top:73.84px;font-size:12px;color:#666;font-weight:normal;">T</div>
<div class="r" style="left:1201.00px;top:46.00px;width:1.00px;height:45.00px;background:#d6d5dd;"></div>
<div class="r" style="left:1202.00px;top:92.00px;width:1.00px;height:387.00px;background:#e6e6e9;"></div>
<div class="t" style="left:1196.20px;width:30px;text-align:center;top:51.34px;font-size:12px;color:#666;font-weight:normal;">26</div>
<div class="t" style="left:1196.20px;width:30px;text-align:center;top:73.84px;font-size:12px;color:#666;font-weight:normal;">F</div>
<div class="t" style="left:-231.20px;width:120px;text-align:center;top:27.84px;font-size:12px;color:#666;font-weight:normal;">week 20</div>
<div class="t" style="left:-96.80px;width:120px;text-align:center;top:27.84px;font-size:12px;color:#666;font-weight:normal;">week 21</div>
<div class="t" style="left:37.60px;width:120px;text-align:center;top:27.84px;font-size:12px;color:#666;font-weight:normal;">week 22</div>
<div class="t" style="left:172.00px;width:120px;text-align:center;top:27.84px;font-size:12px;color:#666;font-weight:normal;">week 23</div>
<div class="t" style="left:306.40px;width:120px;text-align:center;top:27.84px;font-size:12px;color:#666;font-weight:normal;">week 24</div>
<div class="t" style="left:440.80px;width:120px;text-align:center;top:27.84px;font-size:12px;color:#666;font-weight:normal;">week 25</div>
<div class="t" style="left:575.20px;width:120px;text-align:center;top:27.84px;font-size:12px;color:#666;font-weight:normal;">week 26</div>
<div class="t" style="left:709.60px;width:120px;text-align:center;top:27.84px;font-size:12px;color:#666;font-weight:normal;">week 27</div>
<div class="t" style="left:844.00px;width:120px;text-align:center;top:27.84px;font-size:12px;color:#666;font-weight:normal;">week 28</div>
<div class="t" style="left:978.40px;width:120px;text-align:center;top:27.84px;font-size:12px;color:#666;font-weight:normal;">week 29</div>
<div class="t" style="left:1112.80px;width:120px;text-align:center;top:27.84px;font-size:12px;color:#666;font-weight:normal;">week 30</div>
<div class="t" style="left:1247.20px;width:120px;text-align:center;top:27.84px;font-size:12px;color:#666;font-weight:normal;">week 31</div>
<div class="r" style="left:145.00px;top:0.00px;width:1.00px;height:22.00px;background:#d6d5dd;"></div>
<div class="r" style="left:721.00px;top:0.00px;width:1.00px;height:22.00px;background:#d6d5dd;"></div>
<div class="t" style="left:353.60px;width:160px;text-align:center;top:4.84px;font-size:12px;color:#666;font-weight:normal;">June 2024</div>
<div class="t" style="left:939.20px;width:160px;text-align:center;top:4.84px;font-size:12px;color:#666;font-weight:normal;">July 2024</div>
<div class="r" style="left:146.00px;top:92.00px;width:2.00px;height:387.00px;background:#ff9900;"></div>
<div class="r" style="left:0.00px;top:95.00px;width:1174.00px;height:22.00px;background:#73c9b5;"></div>
<div class="t" style="left:49.00px;width:30px;text-align:center;top:95.14px;font-size:12px;color:#1c5f63;font-weight:bold;text-shadow:1px 0 0 #fff,-1px 0 0 #fff,0 1px 0 #fff,0 -1px 0 #fff,1px 1px 0 #fff,-1px -1px 0 #fff,1px -1px 0 #fff,-1px 1px 0 #fff;">15</div>
<div class="t" style="left:549.00px;width:30px;text-align:center;top:95.14px;font-size:12px;color:#1c5f63;font-weight:bold;text-shadow:1px 0 0 #fff,-1px 0 0 #fff,0 1px 0 #fff,0 -1px 0 #fff,1px 1px 0 #fff,-1px -1px 0 #fff,1px -1px 0 #fff,-1px 1px 0 #fff;">15</div>
<div class="t" style="left:1049.00px;width:30px;text-align:center;top:95.14px;font-size:12px;color:#1c5f63;font-weight:bold;text-shadow:1px 0 0 #fff,-1px 0 0 #fff,0 1px 0 #fff,0 -1px 0 #fff,1px 1px 0 #fff,-1px -1px 0 #fff,1px -1px 0 #fff,-1px 1px 0 #fff;">15</div>
<div class="r" style="left:0.00px;top:134.00px;width:1174.00px;height:9.00px;background:#73c9b5;"></div>
<svg style="left:582.70px;top:134px" width="10" height="9"><path d="M0 0 H10 Q6 1.5 5 5 Q4 1.5 0 0 Z" fill="#dfdbab"/><path d="M5 4.5 V9" stroke="#4aa9a0" stroke-width="0.8"/></svg>
<svg style="left:871.60px;top:134px" width="10" height="9"><path d="M0 0 H10 Q6 1.5 5 5 Q4 1.5 0 0 Z" fill="#dfdbab"/><path d="M5 4.5 V9" stroke="#4aa9a0" stroke-width="0.8"/></svg>
<svg style="left:909.50px;top:134px" width="10" height="9"><path d="M0 0 H10 Q6 1.5 5 5 Q4 1.5 0 0 Z" fill="#dfdbab"/><path d="M5 4.5 V9" stroke="#4aa9a0" stroke-width="0.8"/></svg>
<svg style="left:1101.70px;top:134px" width="10" height="9"><path d="M0 0 H10 Q6 1.5 5 5 Q4 1.5 0 0 Z" fill="#dfdbab"/><path d="M5 4.5 V9" stroke="#4aa9a0" stroke-width="0.8"/></svg>
<div class="t" style="left:49.00px;width:30px;text-align:center;top:120.84px;font-size:12px;color:#1c5f63;font-weight:bold;">40</div>
<div class="t" style="left:436.00px;width:30px;text-align:center;top:120.84px;font-size:12px;color:#1c5f63;font-weight:bold;">40</div>
<div class="t" style="left:548.30px;width:30px;text-align:center;top:120.84px;font-size:12px;color:#858200;font-weight:bold;">40</div>
<div class="t" style="left:717.60px;width:30px;text-align:center;top:120.84px;font-size:12px;color:#1c5f63;font-weight:bold;">39</div>
<div class="t" style="left:880.00px;width:30px;text-align:center;top:120.84px;font-size:12px;color:#1c5f63;font-weight:bold;">40</div>
<div class="t" style="left:995.00px;width:30px;text-align:center;top:120.84px;font-size:12px;color:#1c5f63;font-weight:bold;">39</div>
<div class="t" style="left:1048.30px;width:30px;text-align:center;top:120.84px;font-size:12px;color:#858200;font-weight:bold;">40</div>
<div class="r" style="left:0.00px;top:215.00px;width:1174.00px;height:6.00px;background:#73c9b5;"></div>
<div class="t" style="left:49.00px;width:30px;text-align:center;top:201.94px;font-size:12px;color:#1c5f63;font-weight:bold;">25</div>
<div class="t" style="left:549.00px;width:30px;text-align:center;top:201.94px;font-size:12px;color:#1c5f63;font-weight:bold;">25</div>
<div class="t" style="left:1049.00px;width:30px;text-align:center;top:201.94px;font-size:12px;color:#1c5f63;font-weight:bold;">25</div>
<div class="r" style="left:0.00px;top:241.00px;width:1174.00px;height:6.00px;background:#73c9b5;"></div>
<div class="t" style="left:49.00px;width:30px;text-align:center;top:227.74px;font-size:12px;color:#1c5f63;font-weight:bold;">25</div>
<div class="t" style="left:549.00px;width:30px;text-align:center;top:227.74px;font-size:12px;color:#1c5f63;font-weight:bold;">25</div>
<div class="t" style="left:1049.00px;width:30px;text-align:center;top:227.74px;font-size:12px;color:#1c5f63;font-weight:bold;">25</div>
<div class="r" style="left:0.00px;top:267.00px;width:1174.00px;height:6.00px;background:#73c9b5;"></div>
<div class="t" style="left:49.00px;width:30px;text-align:center;top:253.84px;font-size:12px;color:#1c5f63;font-weight:bold;">25</div>
<div class="t" style="left:549.00px;width:30px;text-align:center;top:253.84px;font-size:12px;color:#1c5f63;font-weight:bold;">25</div>
<div class="t" style="left:1049.00px;width:30px;text-align:center;top:253.84px;font-size:12px;color:#1c5f63;font-weight:bold;">25</div>
<div class="r" style="left:89.00px;top:277.00px;width:1085.00px;height:22.00px;background:#dfdbab;"></div>
<div class="r" style="left:0.00px;top:277.00px;width:89.30px;height:22.00px;background:#73c9b5;border-radius:0 8px 0 0;"></div>
<div class="r" style="left:89.30px;top:277.50px;width:38.20px;height:21.50px;background:#73c9b5;border-radius:8px 8px 0 0;"></div>
<div class="r" style="left:89.00px;top:283.50px;width:1.00px;height:15.50px;background:#4aa9a0;"></div>
<div class="r" style="left:127.50px;top:279.70px;width:250.10px;height:19.30px;background:#73c9b5;border-radius:9px 9px 0 0;"></div>
<div class="r" style="left:127.00px;top:285.70px;width:1.00px;height:13.30px;background:#4aa9a0;"></div>
<div class="r" style="left:377.60px;top:279.00px;width:37.70px;height:20.00px;background:#73c9b5;border-radius:9px 9px 0 0;"></div>
<div class="r" style="left:377.00px;top:285.00px;width:1.00px;height:14.00px;background:#4aa9a0;"></div>
<div class="r" style="left:415.30px;top:278.00px;width:19.40px;height:21.00px;background:#73c9b5;border-radius:8px 8px 0 0;"></div>
<div class="r" style="left:415.00px;top:284.00px;width:1.00px;height:15.00px;background:#4aa9a0;"></div>
<div class="r" style="left:434.70px;top:281.70px;width:38.70px;height:17.30px;background:#73c9b5;border-radius:9px 9px 0 0;"></div>
<div class="r" style="left:434.00px;top:287.70px;width:1.00px;height:11.30px;background:#4aa9a0;"></div>
<div class="r" style="left:473.40px;top:284.00px;width:115.10px;height:15.00px;background:#73c9b5;border-radius:9px 9px 0 0;"></div>
<div class="r" style="left:473.00px;top:290.00px;width:1.00px;height:9.00px;background:#4aa9a0;"></div>
<div class="r" style="left:588.50px;top:285.00px;width:115.00px;height:14.00px;background:#73c9b5;border-radius:9px 9px 0 0;"></div>
<div class="r" style="left:588.00px;top:291.00px;width:1.00px;height:8.00px;background:#4aa9a0;"></div>
<div class="r" style="left:703.50px;top:284.00px;width:57.60px;height:15.00px;background:#73c9b5;border-radius:9px 9px 0 0;"></div>
<div class="r" style="left:703.00px;top:290.00px;width:1.00px;height:9.00px;background:#4aa9a0;"></div>
<div class="r" style="left:761.10px;top:285.00px;width:38.10px;height:14.00px;background:#73c9b5;border-radius:9px 9px 0 0;"></div>
<div class="r" style="left:761.00px;top:291.00px;width:1.00px;height:8.00px;background:#4aa9a0;"></div>
<div class="r" style="left:799.20px;top:278.90px;width:77.40px;height:20.10px;background:#73c9b5;border-radius:9px 9px 0 0;"></div>
<div class="r" style="left:799.00px;top:284.90px;width:1.00px;height:14.10px;background:#4aa9a0;"></div>
<div class="r" style="left:876.60px;top:278.00px;width:37.80px;height:21.00px;background:#73c9b5;border-radius:9px 9px 0 0;"></div>
<div class="r" style="left:876.00px;top:284.00px;width:1.00px;height:15.00px;background:#4aa9a0;"></div>
<div class="r" style="left:914.40px;top:279.00px;width:134.90px;height:20.00px;background:#73c9b5;border-radius:9px 9px 0 0;"></div>
<div class="r" style="left:914.00px;top:285.00px;width:1.00px;height:14.00px;background:#4aa9a0;"></div>
<div class="r" style="left:1049.30px;top:277.50px;width:57.00px;height:21.50px;background:#73c9b5;border-radius:9px 9px 0 0;"></div>
<div class="r" style="left:1049.00px;top:283.50px;width:1.00px;height:15.50px;background:#4aa9a0;"></div>
<div class="r" style="left:1106.30px;top:277.00px;width:71.70px;height:22.00px;background:#73c9b5;border-radius:9px 0 0 0;"></div>
<div class="r" style="left:1106.00px;top:283.00px;width:1.00px;height:16.00px;background:#4aa9a0;"></div>
<div class="t" style="left:48.00px;width:30px;text-align:center;top:276.84px;font-size:12px;color:#858200;font-weight:bold;text-shadow:1px 0 0 #fff,-1px 0 0 #fff,0 1px 0 #fff,0 -1px 0 #fff,1px 1px 0 #fff,-1px -1px 0 #fff,1px -1px 0 #fff,-1px 1px 0 #fff;">20</div>
<div class="t" style="left:93.00px;width:30px;text-align:center;top:276.84px;font-size:12px;color:#1c5f63;font-weight:bold;text-shadow:1px 0 0 #fff,-1px 0 0 #fff,0 1px 0 #fff,0 -1px 0 #fff,1px 1px 0 #fff,-1px -1px 0 #fff,1px -1px 0 #fff,-1px 1px 0 #fff;">19</div>
<div class="t" style="left:237.00px;width:30px;text-align:center;top:276.84px;font-size:12px;color:#1c5f63;font-weight:bold;text-shadow:1px 0 0 #fff,-1px 0 0 #fff,0 1px 0 #fff,0 -1px 0 #fff,1px 1px 0 #fff,-1px -1px 0 #fff,1px -1px 0 #fff,-1px 1px 0 #fff;">17</div>
<div class="t" style="left:382.00px;width:30px;text-align:center;top:276.84px;font-size:12px;color:#1c5f63;font-weight:bold;text-shadow:1px 0 0 #fff,-1px 0 0 #fff,0 1px 0 #fff,0 -1px 0 #fff,1px 1px 0 #fff,-1px -1px 0 #fff,1px -1px 0 #fff,-1px 1px 0 #fff;">18</div>
<div class="t" style="left:409.00px;width:30px;text-align:center;top:276.84px;font-size:12px;color:#1c5f63;font-weight:bold;text-shadow:1px 0 0 #fff,-1px 0 0 #fff,0 1px 0 #fff,0 -1px 0 #fff,1px 1px 0 #fff,-1px -1px 0 #fff,1px -1px 0 #fff,-1px 1px 0 #fff;">20</div>
<div class="t" style="left:439.00px;width:30px;text-align:center;top:276.84px;font-size:12px;color:#1c5f63;font-weight:bold;text-shadow:1px 0 0 #fff,-1px 0 0 #fff,0 1px 0 #fff,0 -1px 0 #fff,1px 1px 0 #fff,-1px -1px 0 #fff,1px -1px 0 #fff,-1px 1px 0 #fff;">15</div>
<div class="t" style="left:516.00px;width:30px;text-align:center;top:276.84px;font-size:12px;color:#1c5f63;font-weight:bold;text-shadow:1px 0 0 #fff,-1px 0 0 #fff,0 1px 0 #fff,0 -1px 0 #fff,1px 1px 0 #fff,-1px -1px 0 #fff,1px -1px 0 #fff,-1px 1px 0 #fff;">14</div>
<div class="t" style="left:548.00px;width:30px;text-align:center;top:276.84px;font-size:12px;color:#858200;font-weight:bold;text-shadow:1px 0 0 #fff,-1px 0 0 #fff,0 1px 0 #fff,0 -1px 0 #fff,1px 1px 0 #fff,-1px -1px 0 #fff,1px -1px 0 #fff,-1px 1px 0 #fff;">20</div>
<div class="t" style="left:631.40px;width:30px;text-align:center;top:276.84px;font-size:12px;color:#1c5f63;font-weight:bold;text-shadow:1px 0 0 #fff,-1px 0 0 #fff,0 1px 0 #fff,0 -1px 0 #fff,1px 1px 0 #fff,-1px -1px 0 #fff,1px -1px 0 #fff,-1px 1px 0 #fff;">13</div>
<div class="t" style="left:718.00px;width:30px;text-align:center;top:276.84px;font-size:12px;color:#1c5f63;font-weight:bold;text-shadow:1px 0 0 #fff,-1px 0 0 #fff,0 1px 0 #fff,0 -1px 0 #fff,1px 1px 0 #fff,-1px -1px 0 #fff,1px -1px 0 #fff,-1px 1px 0 #fff;">14</div>
<div class="t" style="left:766.00px;width:30px;text-align:center;top:276.84px;font-size:12px;color:#1c5f63;font-weight:bold;text-shadow:1px 0 0 #fff,-1px 0 0 #fff,0 1px 0 #fff,0 -1px 0 #fff,1px 1px 0 #fff,-1px -1px 0 #fff,1px -1px 0 #fff,-1px 1px 0 #fff;">13</div>
<div class="t" style="left:823.00px;width:30px;text-align:center;top:276.84px;font-size:12px;color:#1c5f63;font-weight:bold;text-shadow:1px 0 0 #fff,-1px 0 0 #fff,0 1px 0 #fff,0 -1px 0 #fff,1px 1px 0 #fff,-1px -1px 0 #fff,1px -1px 0 #fff,-1px 1px 0 #fff;">18</div>
<div class="t" style="left:880.50px;width:30px;text-align:center;top:276.84px;font-size:12px;color:#1c5f63;font-weight:bold;text-shadow:1px 0 0 #fff,-1px 0 0 #fff,0 1px 0 #fff,0 -1px 0 #fff,1px 1px 0 #fff,-1px -1px 0 #fff,1px -1px 0 #fff,-1px 1px 0 #fff;">19</div>
<div class="t" style="left:966.70px;width:30px;text-align:center;top:276.84px;font-size:12px;color:#1c5f63;font-weight:bold;text-shadow:1px 0 0 #fff,-1px 0 0 #fff,0 1px 0 #fff,0 -1px 0 #fff,1px 1px 0 #fff,-1px -1px 0 #fff,1px -1px 0 #fff,-1px 1px 0 #fff;">18</div>
<div class="t" style="left:1049.50px;width:30px;text-align:center;top:276.84px;font-size:12px;color:#858200;font-weight:bold;text-shadow:1px 0 0 #fff,-1px 0 0 #fff,0 1px 0 #fff,0 -1px 0 #fff,1px 1px 0 #fff,-1px -1px 0 #fff,1px -1px 0 #fff,-1px 1px 0 #fff;">20</div>
<div class="t" style="left:1063.80px;width:30px;text-align:center;top:276.84px;font-size:12px;color:#1c5f63;font-weight:bold;text-shadow:1px 0 0 #fff,-1px 0 0 #fff,0 1px 0 #fff,0 -1px 0 #fff,1px 1px 0 #fff,-1px -1px 0 #fff,1px -1px 0 #fff,-1px 1px 0 #fff;">19</div>
<div class="r" style="left:589.70px;top:147.00px;width:284.50px;height:17.00px;background:#cccc00;border-radius:9px;"></div>
<div class="t" style="left:605.00px;top:149.84px;font-size:12px;color:#111;font-weight:normal;">R-R-00074 - Bob the Builder - Quantity: 1</div>
<div class="r" style="left:915.70px;top:173.00px;width:188.20px;height:17.00px;background:#009900;border-radius:9px;"></div>
<div class="t" style="left:931.00px;top:175.84px;font-size:12px;color:#fff;font-weight:bold;letter-spacing:-0.25px;">R-C-00029 - Bob the Builde&hellip;</div>
<div class="r" style="left:90.80px;top:303.00px;width:284.20px;height:17.00px;background:#cccc00;border-radius:9px;"></div>
<div class="t" style="left:106.10px;top:305.84px;font-size:12px;color:#111;font-weight:normal;">R-R-00075 - The Cannon Group PLC - Quant&hellip;</div>
<div class="r" style="left:435.60px;top:303.00px;width:361.40px;height:17.00px;background:#009900;border-radius:9px;"></div>
<div class="t" style="left:450.90px;top:305.84px;font-size:12px;color:#fff;font-weight:bold;letter-spacing:-0.25px;">R-C-00031 - John Haddock Insurance Co. - Quantity: 1</div>
<div class="r" style="left:915.70px;top:303.00px;width:188.20px;height:17.00px;background:#009900;border-radius:9px;"></div>
<div class="t" style="left:931.00px;top:305.84px;font-size:12px;color:#fff;font-weight:bold;letter-spacing:-0.25px;">R-C-00029 - Bob the Builde&hellip;</div>
<div class="r" style="left:474.80px;top:318.00px;width:226.00px;height:17.00px;background:#d00000;border-radius:9px;"></div>
<div class="t" style="left:490.10px;top:320.84px;font-size:12px;color:#fff;font-weight:bold;letter-spacing:-0.25px;">R-Q-00002 - Michael Hering US - &hellip;</div>
<div class="r" style="left:763.20px;top:318.00px;width:284.30px;height:17.00px;background:#d00000;border-radius:9px;"></div>
<div class="t" style="left:778.50px;top:320.84px;font-size:12px;color:#fff;font-weight:bold;letter-spacing:-0.25px;">R-Q-00003 - Selangorian Ltd. - Quantity: 1</div>
<div class="r" style="left:589.80px;top:333.00px;width:284.20px;height:17.00px;background:#cccc00;border-radius:9px;"></div>
<div class="t" style="left:605.10px;top:335.84px;font-size:12px;color:#111;font-weight:normal;">R-R-00074 - Bob the Builder - Quantity: 1</div>
<div class="r" style="left:129.00px;top:356.00px;width:284.20px;height:17.00px;background:#5a5a5a;border-radius:9px;"></div>
<div class="r" style="left:131.50px;top:356.00px;width:279.20px;height:17.00px;background:#009900;border-radius:9px;background-image:repeating-linear-gradient(-45deg, transparent 0 4.7px, rgba(235,235,235,0.8) 4.7px 5.66px);"></div>
<div class="t" style="left:147.00px;top:358.84px;font-size:12px;color:#fff;font-weight:bold;letter-spacing:-0.25px;">R-C-00030 - Michael Hering US - Quantity: 1</div>
<div class="r" style="left:129.00px;top:382.00px;width:284.20px;height:17.00px;background:#5a5a5a;border-radius:9px;"></div>
<div class="r" style="left:131.50px;top:382.00px;width:279.20px;height:17.00px;background:#009900;border-radius:9px;background-image:repeating-linear-gradient(-45deg, transparent 0 4.7px, rgba(235,235,235,0.8) 4.7px 5.66px);"></div>
<div class="t" style="left:147.00px;top:384.84px;font-size:12px;color:#fff;font-weight:bold;letter-spacing:-0.25px;">R-C-00030 - Michael Hering US - Quantity: 1</div>
<div class="r" style="left:435.60px;top:356.00px;width:361.40px;height:17.00px;background:#009900;border-radius:9px;"></div>
<div class="t" style="left:450.90px;top:358.84px;font-size:12px;color:#fff;font-weight:bold;letter-spacing:-0.25px;">R-C-00031 - John Haddock Insurance Co. - Quantity: 1</div>
<div class="r" style="left:435.60px;top:382.00px;width:361.40px;height:17.00px;background:#009900;border-radius:9px;"></div>
<div class="t" style="left:450.90px;top:384.84px;font-size:12px;color:#fff;font-weight:bold;letter-spacing:-0.25px;">R-C-00031 - John Haddock Insurance Co. - Quantity: 1</div>
<div class="r" style="left:435.60px;top:407.70px;width:361.40px;height:17.00px;background:#009900;border-radius:9px;"></div>
<div class="t" style="left:450.90px;top:410.54px;font-size:12px;color:#fff;font-weight:bold;letter-spacing:-0.25px;">R-C-00031 - John Haddock Insurance Co. - Quantity: 1</div>
<div class="r" style="left:435.60px;top:433.60px;width:361.40px;height:17.00px;background:#009900;border-radius:9px;"></div>
<div class="t" style="left:450.90px;top:436.44px;font-size:12px;color:#fff;font-weight:bold;letter-spacing:-0.25px;">R-C-00031 - John Haddock Insurance Co. - Quantity: 1</div>
</div>
<div class="r" style="left:1467px;top:245px;width:17px;height:479px;background:#f0f0f0;"></div>
<div class="r" style="left:1467px;top:262px;width:17px;height:190px;background:#dedede;"></div>
<div class="r" style="left:1466px;top:245px;width:1px;height:497px;background:#d6d5dd;"></div>
<div class="r" style="left:1467px;top:261px;width:17px;height:1px;background:#d6d5dd;"></div>
<div class="r" style="left:1467px;top:707px;width:17px;height:1px;background:#d6d5dd;"></div>
<svg style="left:1467px;top:245px" width="17" height="16"><path d="M5.3 9.8 L8.5 6.8 L11.7 9.8" fill="none" stroke="#777" stroke-width="1"/></svg>
<svg style="left:1467px;top:708px" width="17" height="16"><path d="M5.3 6.5 L8.5 9.5 L11.7 6.5" fill="none" stroke="#777" stroke-width="1"/></svg>
<div class="r" style="left:292px;top:725px;width:1174px;height:17px;background:#f0f0f0;"></div>
<div class="r" style="left:695px;top:725px;width:78px;height:17px;background:#dfdfdf;"></div>
<div class="r" style="left:292px;top:724px;width:1192px;height:1px;background:#d6d5dd;"></div>
<div class="r" style="left:308px;top:725px;width:1px;height:17px;background:#d6d5dd;"></div>
<div class="r" style="left:1449px;top:725px;width:1px;height:17px;background:#d6d5dd;"></div>
<div class="r" style="left:1467px;top:725px;width:17px;height:17px;background:#f0f0f0;"></div>
<svg style="left:292px;top:725px" width="17" height="17"><path d="M10 5 L6.5 8.5 L10 12" fill="none" stroke="#888" stroke-width="1"/></svg>
<svg style="left:1449px;top:725px" width="17" height="17"><path d="M7 5 L10.5 8.5 L7 12" fill="none" stroke="#888" stroke-width="1"/></svg>
<svg style="left:70px;top:745px" width="180" height="30"><circle cx="14" cy="15" r="6.8" fill="none" stroke="#999" stroke-width="1"/><path d="M11 13.8 L14 16.8 L17 13.8" fill="none" stroke="#999" stroke-width="1"/><circle cx="44.1" cy="15" r="6.8" fill="none" stroke="#999" stroke-width="1"/><path d="M41.1 16.5 L44.1 13.5 L47.1 16.5" fill="none" stroke="#999" stroke-width="1"/><circle cx="72.4" cy="13.5" r="6.3" fill="none" stroke="#999" stroke-width="1"/><path d="M76.8 17.9 L81.6 22.5 M68.6 13.5 H76.2 M72.4 9.7 V17.3" fill="none" stroke="#999" stroke-width="1"/><circle cx="102.5" cy="13.5" r="6.3" fill="none" stroke="#999" stroke-width="1"/><path d="M106.9 17.9 L111.7 22.5 M98.7 13.5 H106.3" fill="none" stroke="#999" stroke-width="1"/><circle cx="132.6" cy="13.5" r="6.3" fill="none" stroke="#999" stroke-width="1"/><path d="M137 17.9 L141.8 22.5" fill="none" stroke="#999" stroke-width="1"/><path d="M130.9 11.3 L128.8 13.5 L130.9 15.7 Z M134.3 11.3 L136.4 13.5 L134.3 15.7 Z" fill="#999"/><path d="M157.5 7.6 H162.5 V19.5 H157.5 Z M164.5 10.5 H169.5 V22.5 H164.5 Z M165.6 8 H168.4" fill="none" stroke="#999" stroke-width="1"/></svg>
<div class="t" style="left:255.00px;top:753.84px;font-size:12px;color:#999;font-weight:normal;">Language:</div>
<svg style="left:319px;top:752px" width="24" height="17"><rect x="0" y="0.00" width="24" height="1.23" fill="#f29a9a"/><rect x="0" y="1.23" width="24" height="1.23" fill="#fff"/><rect x="0" y="2.46" width="24" height="1.23" fill="#f29a9a"/><rect x="0" y="3.69" width="24" height="1.23" fill="#fff"/><rect x="0" y="4.92" width="24" height="1.23" fill="#f29a9a"/><rect x="0" y="6.15" width="24" height="1.23" fill="#fff"/><rect x="0" y="7.38" width="24" height="1.23" fill="#f29a9a"/><rect x="0" y="8.61" width="24" height="1.23" fill="#fff"/><rect x="0" y="9.84" width="24" height="1.23" fill="#f29a9a"/><rect x="0" y="11.07" width="24" height="1.23" fill="#fff"/><rect x="0" y="12.30" width="24" height="1.23" fill="#f29a9a"/><rect x="0" y="13.53" width="24" height="1.23" fill="#fff"/><rect x="0" y="14.76" width="24" height="1.23" fill="#f29a9a"/><rect x="0" y="0" width="11" height="8.6" fill="#8a8ed2"/><circle cx="1.30" cy="1.20" r="0.45" fill="#fff"/><circle cx="3.40" cy="1.20" r="0.45" fill="#fff"/><circle cx="5.50" cy="1.20" r="0.45" fill="#fff"/><circle cx="7.60" cy="1.20" r="0.45" fill="#fff"/><circle cx="9.70" cy="1.20" r="0.45" fill="#fff"/><circle cx="1.30" cy="3.25" r="0.45" fill="#fff"/><circle cx="3.40" cy="3.25" r="0.45" fill="#fff"/><circle cx="5.50" cy="3.25" r="0.45" fill="#fff"/><circle cx="7.60" cy="3.25" r="0.45" fill="#fff"/><circle cx="9.70" cy="3.25" r="0.45" fill="#fff"/><circle cx="1.30" cy="5.30" r="0.45" fill="#fff"/><circle cx="3.40" cy="5.30" r="0.45" fill="#fff"/><circle cx="5.50" cy="5.30" r="0.45" fill="#fff"/><circle cx="7.60" cy="5.30" r="0.45" fill="#fff"/><circle cx="9.70" cy="5.30" r="0.45" fill="#fff"/><circle cx="1.30" cy="7.35" r="0.45" fill="#fff"/><circle cx="3.40" cy="7.35" r="0.45" fill="#fff"/><circle cx="5.50" cy="7.35" r="0.45" fill="#fff"/><circle cx="7.60" cy="7.35" r="0.45" fill="#fff"/><circle cx="9.70" cy="7.35" r="0.45" fill="#fff"/></svg>
<svg style="left:346px;top:755px" width="10" height="10"><path d="M1.5 3 H8.5 L5 6.5 Z" fill="#bbb"/></svg>
<div class="t" style="left:364px;top:753.84px;font-size:12px;color:#999;">Style: <b style="color:#3d7bc4;margin-left:-1px">White</b><svg style="position:relative;display:inline-block;vertical-align:baseline;margin-left:2px;top:-1px" width="8" height="5"><path d="M0.5 0.5 H7.5 L4 4.5 Z" fill="#aaa"/></svg></div>
<div class="t" style="left:450px;top:753.84px;font-size:12px;color:#999;">Gantt: <b style="color:#3d7bc4;margin-left:-1px">White</b><svg style="position:relative;display:inline-block;vertical-align:baseline;margin-left:2px;top:-1px" width="8" height="5"><path d="M0.5 0.5 H7.5 L4 4.5 Z" fill="#aaa"/></svg></div>
<div class="t" style="left:538px;top:753.84px;font-size:12px;color:#999;">Size: <b style="color:#3d7bc4;margin-left:-1px">Low</b><svg style="position:relative;display:inline-block;vertical-align:baseline;margin-left:2px;top:-1px" width="8" height="5"><path d="M0.5 0.5 H7.5 L4 4.5 Z" fill="#aaa"/></svg></div>
<div class="t" style="left:612px;top:753.84px;font-size:12px;color:#999;">Scale: <b style="color:#3d7bc4;margin-left:-1px">100%</b><svg style="position:relative;display:inline-block;vertical-align:baseline;margin-left:2px;top:-1px" width="8" height="5"><path d="M0.5 0.5 H7.5 L4 4.5 Z" fill="#aaa"/></svg></div>
<div class="t" style="left:700px;top:753.84px;font-size:12px;color:#999;">Contrast: <b style="color:#3d7bc4;margin-left:-1px">Default</b><svg style="position:relative;display:inline-block;vertical-align:baseline;margin-left:2px;top:-1px" width="8" height="5"><path d="M0.5 0.5 H7.5 L4 4.5 Z" fill="#aaa"/></svg></div>
<div class="t" style="left:815.00px;top:755.53px;font-size:10px;color:#555;font-weight:bold;letter-spacing:-0.55px;">EJS TreeGrid 16.1</div>
</body></html>
